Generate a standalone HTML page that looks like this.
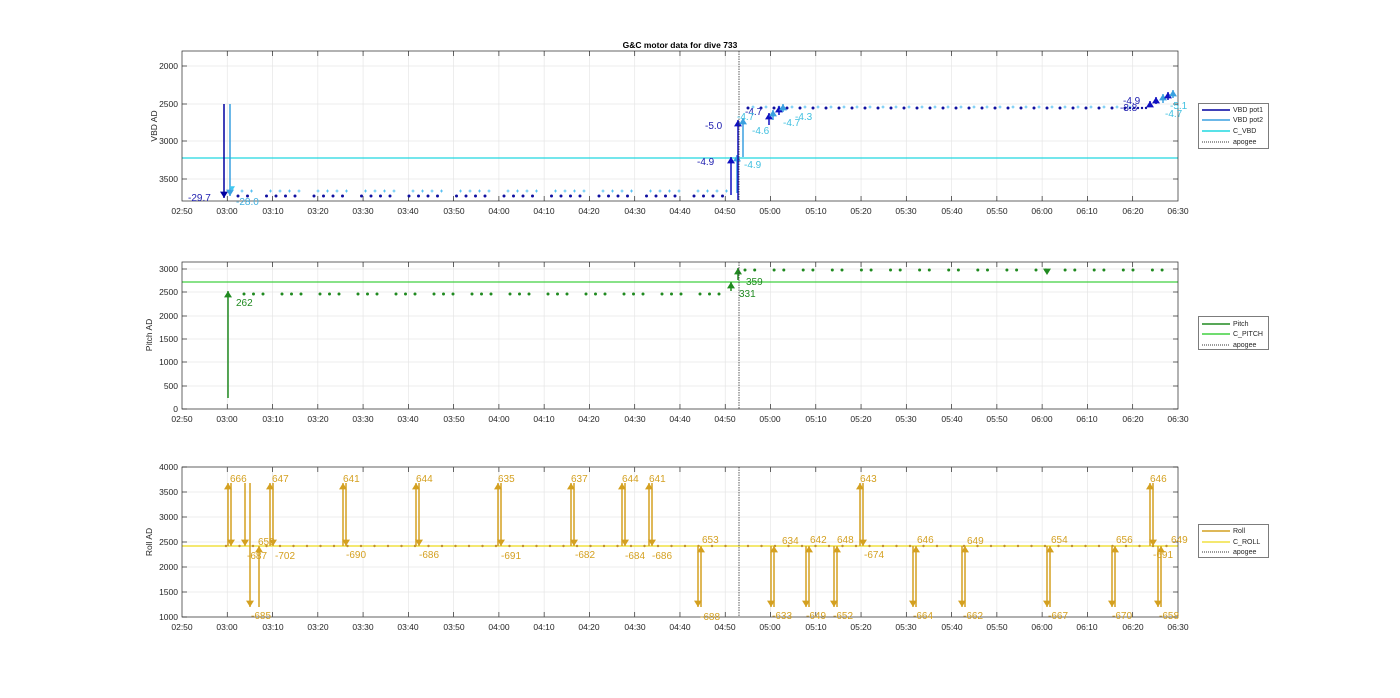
<!DOCTYPE html>
<html><head><meta charset="utf-8"><style>
body{margin:0;background:#fff;width:1400px;height:693px;overflow:hidden}
svg{font-family:"Liberation Sans",sans-serif}
.t{font-size:8.5px;fill:#262626}
</style></head><body>
<svg id="s" width="1400" height="693" xmlns="http://www.w3.org/2000/svg">
<g id="g"></g>
<text x="680" y="48" text-anchor="middle" style="font-size:8.5px;font-weight:bold;fill:#000">G&amp;C motor data for dive 733</text>
<g class="t" text-anchor="end">
<text x="178" y="69">2000</text><text x="178" y="107">2500</text><text x="178" y="144">3000</text><text x="178" y="182">3500</text>
<text x="178" y="272">3000</text><text x="178" y="295">2500</text><text x="178" y="319">2000</text><text x="178" y="342">1500</text><text x="178" y="365">1000</text><text x="178" y="389">500</text><text x="178" y="412">0</text>
<text x="178" y="470">4000</text><text x="178" y="495">3500</text><text x="178" y="520">3000</text><text x="178" y="545">2500</text><text x="178" y="570">2000</text><text x="178" y="595">1500</text><text x="178" y="620">1000</text>
</g>
<g class="t" text-anchor="middle">
<text transform="translate(157,126) rotate(-90)">VBD AD</text>
<text transform="translate(152,335) rotate(-90)">Pitch AD</text>
<text transform="translate(152,542) rotate(-90)">Roll AD</text>
</g>
<g class="t" text-anchor="middle" id="xl">
<g transform="translate(0,214)"><text x="182">02:50</text><text x="227">03:00</text><text x="273">03:10</text><text x="318">03:20</text><text x="363">03:30</text><text x="408">03:40</text><text x="454">03:50</text><text x="499">04:00</text><text x="544">04:10</text><text x="589">04:20</text><text x="635">04:30</text><text x="680">04:40</text><text x="725">04:50</text><text x="770">05:00</text><text x="816">05:10</text><text x="861">05:20</text><text x="906">05:30</text><text x="952">05:40</text><text x="997">05:50</text><text x="1042">06:00</text><text x="1087">06:10</text><text x="1133">06:20</text><text x="1178">06:30</text></g>
<g transform="translate(0,422)"><text x="182">02:50</text><text x="227">03:00</text><text x="273">03:10</text><text x="318">03:20</text><text x="363">03:30</text><text x="408">03:40</text><text x="454">03:50</text><text x="499">04:00</text><text x="544">04:10</text><text x="589">04:20</text><text x="635">04:30</text><text x="680">04:40</text><text x="725">04:50</text><text x="770">05:00</text><text x="816">05:10</text><text x="861">05:20</text><text x="906">05:30</text><text x="952">05:40</text><text x="997">05:50</text><text x="1042">06:00</text><text x="1087">06:10</text><text x="1133">06:20</text><text x="1178">06:30</text></g>
<g transform="translate(0,630)"><text x="182">02:50</text><text x="227">03:00</text><text x="273">03:10</text><text x="318">03:20</text><text x="363">03:30</text><text x="408">03:40</text><text x="454">03:50</text><text x="499">04:00</text><text x="544">04:10</text><text x="589">04:20</text><text x="635">04:30</text><text x="680">04:40</text><text x="725">04:50</text><text x="770">05:00</text><text x="816">05:10</text><text x="861">05:20</text><text x="906">05:30</text><text x="952">05:40</text><text x="997">05:50</text><text x="1042">06:00</text><text x="1087">06:10</text><text x="1133">06:20</text><text x="1178">06:30</text></g>
</g>
<g style="font-size:10px">
<text x="188" y="201" fill="#2020b0">-29.7</text><text x="236" y="205" fill="#40b0e0">-28.0</text>
<text x="697" y="165" fill="#2020b0">-4.9</text><text x="744" y="168" fill="#40c0e0">-4.9</text>
<text x="705" y="129" fill="#2020b0">-5.0</text><text x="752" y="134" fill="#40c0e0">-4.6</text>
<text x="745" y="115" fill="#2020b0">-4.7</text><text x="737" y="120" fill="#40c0e0">-4.7</text>
<text x="783" y="126" fill="#40c0e0">-4.7</text><text x="795" y="120" fill="#40c0e0">-4.3</text>
<text x="1123" y="104" fill="#2020b0">-4.9</text><text x="1120" y="111" fill="#2020b0">-3.8</text>
<text x="1170" y="109" fill="#40c0e0">-5.1</text><text x="1165" y="117" fill="#40c0e0">-4.7</text>
</g>
<g style="font-size:10px" fill="#208a20">
<text x="236" y="306">262</text><text x="739" y="297">331</text><text x="746" y="285">359</text>
</g>
<g style="font-size:10px" fill="#d4a020">
<text x="230" y="482">666</text><text x="247" y="559">-687</text><text x="258" y="545">650</text><text x="251" y="619">-685</text><text x="272" y="482">647</text><text x="275" y="559">-702</text>
<text x="343" y="482">641</text><text x="346" y="558">-690</text><text x="416" y="482">644</text><text x="419" y="558">-686</text>
<text x="498" y="482">635</text><text x="501" y="559">-691</text><text x="571" y="482">637</text><text x="575" y="558">-682</text>
<text x="622" y="482">644</text><text x="625" y="559">-684</text><text x="649" y="482">641</text><text x="652" y="559">-686</text>
<text x="702" y="543">653</text><text x="700" y="620">-688</text><text x="782" y="544">634</text><text x="772" y="619">-633</text>
<text x="810" y="543">642</text><text x="806" y="619">-649</text><text x="837" y="543">648</text><text x="833" y="619">-652</text>
<text x="860" y="482">643</text><text x="864" y="558">-674</text><text x="917" y="543">646</text><text x="913" y="619">-664</text>
<text x="967" y="544">649</text><text x="963" y="619">-662</text><text x="1051" y="543">654</text><text x="1048" y="619">-667</text>
<text x="1116" y="543">656</text><text x="1112" y="619">-670</text><text x="1150" y="482">646</text><text x="1153" y="558">-691</text>
<text x="1171" y="543">649</text><text x="1159" y="619">-658</text>
</g>
<g style="font-size:7px" fill="#262626">
<rect x="1198.5" y="103.5" width="70" height="45" fill="#fff" stroke="#262626" stroke-width="0.6"/>
<line x1="1202" y1="110" x2="1230" y2="110" stroke="#0000a0" stroke-width="1.5"/><text x="1233" y="112">VBD pot1</text>
<line x1="1202" y1="120" x2="1230" y2="120" stroke="#3aa0e0" stroke-width="1.5"/><text x="1233" y="122">VBD pot2</text>
<line x1="1202" y1="131" x2="1230" y2="131" stroke="#20d8e0" stroke-width="1.5"/><text x="1233" y="133">C_VBD</text>
<line x1="1202" y1="142" x2="1230" y2="142" stroke="#333" stroke-dasharray="1,1"/><text x="1233" y="144">apogee</text>
<rect x="1198.5" y="316.5" width="70" height="33" fill="#fff" stroke="#262626" stroke-width="0.6"/>
<line x1="1202" y1="324" x2="1230" y2="324" stroke="#208a20" stroke-width="1.5"/><text x="1233" y="326">Pitch</text>
<line x1="1202" y1="334" x2="1230" y2="334" stroke="#40d040" stroke-width="1.5"/><text x="1233" y="336">C_PITCH</text>
<line x1="1202" y1="345" x2="1230" y2="345" stroke="#333" stroke-dasharray="1,1"/><text x="1233" y="347">apogee</text>
<rect x="1198.5" y="524.5" width="70" height="33" fill="#fff" stroke="#262626" stroke-width="0.6"/>
<line x1="1202" y1="531" x2="1230" y2="531" stroke="#d4a020" stroke-width="1.5"/><text x="1233" y="533">Roll</text>
<line x1="1202" y1="542" x2="1230" y2="542" stroke="#f0e040" stroke-width="1.5"/><text x="1233" y="544">C_ROLL</text>
<line x1="1202" y1="552" x2="1230" y2="552" stroke="#333" stroke-dasharray="1,1"/><text x="1233" y="554">apogee</text>
</g>
</svg>
<script>
var g=document.getElementById('g'),h='';
function L(a,b,c,d,col,w,da){h+='<line x1="'+a+'" y1="'+b+'" x2="'+c+'" y2="'+d+'" stroke="'+col+'" stroke-width="'+(w||1)+'"'+(da?' stroke-dasharray="'+da+'"':'')+'/>';}
function T(x,y,up,col,s){s=s||4;var p=up?(x-s)+','+(y+s*1.6)+' '+(x+s)+','+(y+s*1.6)+' '+x+','+y:(x-s)+','+(y-s*1.6)+' '+(x+s)+','+(y-s*1.6)+' '+x+','+y;h+='<polygon points="'+p+'" fill="'+col+'"/>';}
function A(x,y1,y2,col){L(x,y1,x,y2,col,1.5);T(x,y2,y2<y1,col);}
function D(x,y,col,r){h+='<circle cx="'+x+'" cy="'+y+'" r="'+(r||1.5)+'" fill="'+col+'"/>';}
function P(x,y,col){L(x-1.5,y,x+1.5,y,col,0.8);L(x,y-1.5,x,y+1.5,col,0.8);}
var ax=[[51,201,[66,104,141,179]],[262,409,[269,292,316,339,362,386,409]],[467,617,[467,492,517,542,567,592,617]]];
ax.forEach(function(a){
 for(var i=1;i<22;i++){var x=182+i*45.27;L(x,a[0],x,a[1],'#e6e6e6',0.7);L(x,a[0],x,a[0]+5,'#262626',0.7);L(x,a[1],x,a[1]-5,'#262626',0.7);}
 a[2].forEach(function(y){L(182,y,1178,y,'#e6e6e6',0.7);L(182,y,187,y,'#262626',0.7);L(1178,y,1173,y,'#262626',0.7);});
});
L(182,158,1178,158,'#20d8e0',1.2);
var k=0;
for(var x=238;x<728;x+=9.5){k++;if(k%5==3)continue;D(x,196,'#1010a0');P(x+4,191,'#40b8f0');}
k=0;
for(var x=748;x<1130;x+=13){k++;D(x,108,'#1010a0');P(x+5,107,'#40b8f0');}
for(var x=1130;x<1150;x+=4)D(x,108,'#1010a0',1.2);
A(224,104,198,'#0000a0');A(230,104,196,'#3aa0e0');T(232,191,0,'#40c8f0',3);
A(731,195,157,'#1010c0');A(737,193,155,'#3aa0e0');A(738,200,120,'#1010c0');A(743,157,118,'#3aa0e0');
A(769,125,113,'#1010c0');A(773,120,110,'#3aa0e0');A(779,115,106,'#1010c0');A(783,112,104,'#3aa0e0');
A(1150,107,101,'#1010c0');A(1156,104,97,'#1010c0');A(1163,103,94,'#3aa0e0');A(1168,100,92,'#1010c0');A(1173,98,90,'#3aa0e0');
L(182,282,1178,282,'#40d040',1.2);
k=0;for(var x=244;x<728;x+=9.5){k++;if(k%4!=0)D(x,294,'#208a20');}
k=0;for(var x=745;x<1170;x+=9.7){k++;if(k%3!=0)D(x,270,'#208a20');}
A(228,398,291,'#208a20');A(731,291,282,'#208a20');A(738,280,268,'#208a20');T(1047,275,0,'#208a20');
L(182,546,1178,546,'#f0e040',1.5);
for(var x=226;x<735;x+=13.5)D(x,546,'#c09030',1.2);
for(var x=748;x<1175;x+=13.5)D(x,546,'#c09030',1.2);
var c='#d4a020';
[228,270,343,416,498,571,622,649,860,1150].forEach(function(x){A(x,546,483,c);A(x+3,483,546,c);});
A(245,483,546,c);A(250,483,607,c);
[698,771,806,834,913,962,1047,1112,1158].forEach(function(x){A(x,546,607,c);A(x+3,607,546,c);});
A(259,607,546,c);
ax.forEach(function(a){L(739,a[0],739,a[1],'#333',0.8,'1.5,1');h+='<rect x="182" y="'+a[0]+'" width="996" height="'+(a[1]-a[0])+'" fill="none" stroke="#262626" stroke-width="0.7"/>';});
g.innerHTML=h;
</script>
</body></html>
